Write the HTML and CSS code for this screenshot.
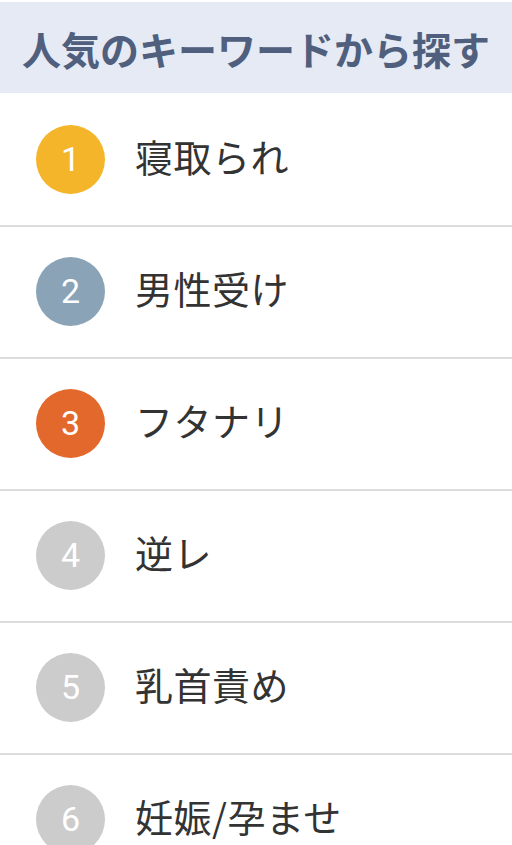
FILE: index.html
```html
<!DOCTYPE html>
<html lang="ja">
<head>
  <meta charset="UTF-8">
  <meta name="viewport" content="width=device-width, initial-scale=1.0">
  <title>人気のキーワードから探す</title>
  <link rel="stylesheet" href="styles.css">
</head>
<body>
  <div class="keywords">
    <h2 class="keywords-title">人気のキーワードから探す</h2>
    <ul class="keyword-list">
      <li class="keyword"><span class="rank rank-1">1</span><span class="word">寝取られ</span></li>
      <li class="keyword"><span class="rank rank-2">2</span><span class="word">男性受け</span></li>
      <li class="keyword"><span class="rank rank-3">3</span><span class="word">フタナリ</span></li>
      <li class="keyword"><span class="rank">4</span><span class="word">逆レ</span></li>
      <li class="keyword"><span class="rank">5</span><span class="word">乳首責め</span></li>
      <li class="keyword"><span class="rank">6</span><span class="word">妊娠/孕ませ</span></li>
    </ul>
  </div>
</body>
</html>
```

FILE: styles.css
```css
* {
  margin: 0;
  padding: 0;
  box-sizing: border-box;
}

body {
  font-family: "Noto Sans CJK JP", "Noto Sans", sans-serif;
  background-color: white;
  color: #333;
}

.keywords {
  padding-top: 2px;
}

.keywords-title {
  height: 91px;
  display: flex;
  align-items: center;
  justify-content: center;
  background-color: #e5eaf4;
  color: #4f5f7d;
  font-size: 39px;
  font-weight: bold;
  white-space: nowrap;
}

.keyword-list {
  list-style: none;
  padding-top: 2px;
}

.keyword {
  height: 132px;
  display: flex;
  align-items: center;
  padding-left: 36px;
  border-bottom: 2px solid #dcdcdc;
}

.rank {
  width: 69px;
  height: 69px;
  border-radius: 50%;
  background-color: #cccccc;
  color: white;
  font-family: Roboto, sans-serif;
  font-size: 34px;
  display: flex;
  align-items: center;
  justify-content: center;
  flex-shrink: 0;
  margin-top: -2px;
}

.rank-1 {
  background-color: #f5b52b;
}

.rank-2 {
  background-color: #8aa3b6;
}

.rank-3 {
  background-color: #e3682b;
}

.word {
  margin-left: 30px;
  font-size: 38px;
  letter-spacing: 0.5px;
  line-height: 1;
  margin-top: -8px;
}
```
